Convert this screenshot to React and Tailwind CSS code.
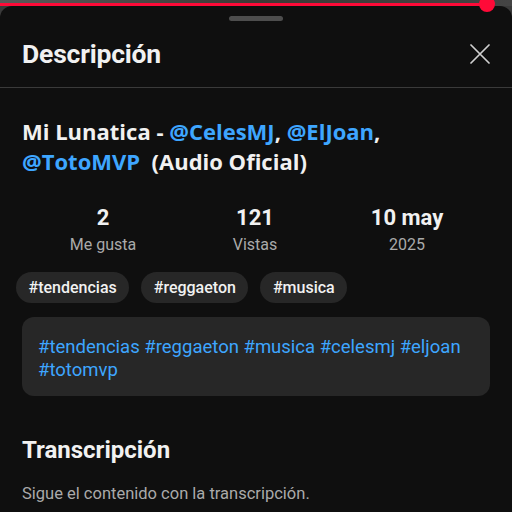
const stats = [
  { value: '2', label: 'Me gusta' },
  { value: '121', label: 'Vistas' },
  { value: '10 may', label: '2025' },
];

const chips = ['#tendencias', '#reggaeton', '#musica'];

export default function App() {
  return (
    <div className="w-[512px] h-[512px] overflow-hidden bg-[#3a3a3a] font-['Roboto',sans-serif] relative">
      {/* video strip + progress */}
      <div className="h-[6px] bg-gradient-to-r from-[#5a5a5a] via-[#3d3a36] to-[#444]" />
      <div className="absolute left-0 top-[3px] h-[3px] w-[488px] bg-[#ff0a38]" />
      <div className="absolute left-[479px] top-[-4px] w-4 h-4 rounded-full bg-[#ff0a38] z-10" />

      <div className="bg-[#0f0f0f] rounded-t-xl h-[506px]">
        <div className="flex justify-center pt-[10px]">
          <div className="w-[54px] h-[5px] rounded-full bg-[#4d4d4d]" />
        </div>

        <div className="flex items-center justify-between pl-[22px] pr-[22px] h-[66px]">
          <h1 className="text-[26.5px] font-bold text-[#f1f1f1] tracking-[-0.2px]">Descripción</h1>
          <svg width="20" height="20" viewBox="0 0 20 20" className="text-[#d0d0d0] mb-[1px]">
            <path d="M1 1L19 19M19 1L1 19" stroke="currentColor" strokeWidth="1.7" strokeLinecap="round" />
          </svg>
        </div>
        <div className="h-px bg-[#3a3a3a]" />

        <div className="px-[22px] pt-[28px]">
          <p className="font-['Open_Sans',sans-serif] font-bold text-[22px] leading-[30px] text-[#f1f1f1]">
            Mi Lunatica - <span className="text-[#3ea6ff]">@CelesMJ</span>,{' '}
            <span className="text-[#3ea6ff]">@ElJoan</span>,<br />
            <span className="text-[#3ea6ff]">@TotoMVP</span>&nbsp; (Audio Oficial)
          </p>
        </div>

        <div className="grid grid-cols-3 mt-[29px] pl-[27px] pr-[29px]">
          {stats.map((s) => (
            <div key={s.label} className="flex flex-col items-center">
              <span className="text-[22px] font-bold leading-[26px] text-[#f1f1f1]">{s.value}</span>
              <span className="text-[16px] leading-[22px] text-[#aaaaaa] mt-[3px]">{s.label}</span>
            </div>
          ))}
        </div>

        <div className="flex gap-[12px] pl-[16px] mt-[16px]">
          {chips.map((c) => (
            <span
              key={c}
              className="h-[31px] px-[12.5px] flex items-center rounded-full bg-[#272727] text-[16px] font-medium text-[#f1f1f1]"
            >
              {c}
            </span>
          ))}
        </div>

        <div className="mx-[22px] mt-[14px] rounded-xl bg-[#272727] px-[16px] pt-[19px] pb-[14px]">
          <p className="text-[18.5px] leading-[23px] text-[#3ea6ff]">
            #tendencias #reggaeton #musica #celesmj #eljoan #totomvp
          </p>
        </div>

        <div className="px-[22px] mt-[40px]">
          <h2 className="text-[24px] font-bold text-[#f1f1f1] leading-[28px]">Transcripción</h2>
          <p className="text-[16.5px] text-[#aaaaaa] mt-[19px] leading-[22px]">
            Sigue el contenido con la transcripción.
          </p>
        </div>
      </div>
    </div>
  );
}
